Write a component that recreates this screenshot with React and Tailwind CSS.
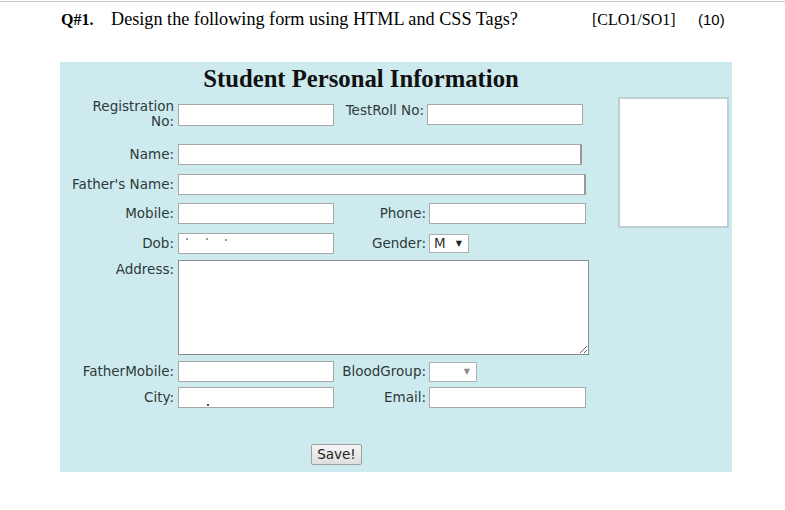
import React from 'react'

const labelFont = {fontFamily: '"DejaVu Sans", Verdana, sans-serif'}

function Label({children, className = ''}) {
	return (
		<div className={`text-right text-[13.5px] leading-[15px] text-[#2e3a3a] ${className}`}>{children}</div>
	)
}

function Field({className = '', children}) {
	return <div className={`relative border border-[#a8a8a8] bg-white ${className}`}>{children}</div>
}

function Select({value, width, dark}) {
	return (
		<div className={`flex items-center justify-between border border-[#b0b0b0] bg-white pl-[4px] pr-[6px] ${width}`}>
			<span className="text-[13.5px] leading-none text-[#333]">{value}</span>
			<span className={`text-[8px] leading-none ${dark ? 'text-[#222]' : 'text-[#8a8a8a]'}`}>▼</span>
		</div>
	)
}

export default function App() {
	return (
		<div className="w-[785px] h-[510px] bg-white overflow-hidden">
			<div className="pt-[1px]">
				<div className="border-t border-[#c4c4c4]" />
			</div>
			{/* question header */}
			<div className="flex items-baseline pl-[61px] pt-[5px] h-[29px] leading-[24px] text-black">
				<span className="w-[50px] text-[16px] font-bold" style={{fontFamily: '"Liberation Serif", serif'}}>Q#1.</span>
				<span className="w-[481px] text-[18.2px]" style={{fontFamily: '"Liberation Serif", serif'}}>Design the following form using HTML and CSS Tags?</span>
				<span className="w-[106px] text-[16px]" style={{fontFamily: '"Liberation Serif", serif'}}>[CLO1/SO1]</span>
				<span className="text-[15px]" style={{fontFamily: '"Liberation Sans", sans-serif'}}>(10)</span>
			</div>

			{/* form panel */}
			<div className="ml-[60px] mt-[31px] w-[672px] h-[410px] bg-[#cdebee] pt-[3px]" style={labelFont}>
				<div
					className="pr-[70px] text-center text-[24.7px] font-bold leading-[28px] text-[#111]"
					style={{fontFamily: '"Liberation Serif", serif'}}
				>
					Student Personal Information
				</div>

				<div className="mt-[4px] flex">
					<div className="w-[553px]">
						{/* registration / testroll */}
						<div className="mt-[2px] flex items-start h-[30px]">
							<Label className="w-[118px] pr-[4px]">Registration<br />No:</Label>
							<Field className="mt-[5px] w-[156px] h-[22px]" />
							<Label className="mt-[4px] w-[93px] pr-[3px]">TestRoll No:</Label>
							<Field className="mt-[5px] w-[156px] h-[21px]" />
						</div>

						<div className="mt-[15px] flex items-center h-[21px]">
							<Label className="w-[118px] pr-[4px]">Name:</Label>
							<Field className="w-[404px] h-[21px] border-r-2 border-r-[#999]" />
						</div>

						<div className="mt-[9px] flex items-center h-[21px]">
							<Label className="w-[118px] pr-[4px]">Father's Name:</Label>
							<Field className="w-[408px] h-[21px] border-r-2 border-r-[#999]" />
						</div>

						<div className="mt-[8px] flex items-center h-[21px]">
							<Label className="w-[118px] pr-[4px]">Mobile:</Label>
							<Field className="w-[156px] h-[21px]" />
							<Label className="w-[95px] pr-[3px]">Phone:</Label>
							<Field className="w-[157px] h-[21px]" />
						</div>

						<div className="mt-[9px] flex items-center h-[21px]">
							<Label className="w-[118px] pr-[4px]">Dob:</Label>
							<Field className="w-[156px] h-[21px]">
								<span className="absolute left-[7px] top-[4px] h-[1.5px] w-[1.5px] bg-[#999]" />
								<span className="absolute left-[27px] top-[4px] h-[1.5px] w-[1.5px] bg-[#999]" />
								<span className="absolute left-[46px] top-[5px] h-[1.5px] w-[1.5px] bg-[#999]" />
							</Field>
							<Label className="w-[95px] pr-[3px]">Gender:</Label>
							<Select value="M" width="w-[40px] h-[19px]" dark />
						</div>

						<div className="mt-[6px] flex items-start">
							<Label className="w-[118px] pr-[4px] pt-[2px]">Address:</Label>
							<textarea className="block w-[411px] h-[95px] border border-[#8c8c8c] bg-white" />
						</div>

						<div className="mt-[6px] flex items-center h-[21px]">
							<Label className="w-[118px] pr-[4px]">FatherMobile:</Label>
							<Field className="w-[156px] h-[21px]" />
							<Label className="w-[95px] pr-[3px]">BloodGroup:</Label>
							<Select value="" width="w-[48px] h-[20px]" />
						</div>

						<div className="mt-[5px] flex items-center h-[21px]">
							<Label className="w-[118px] pr-[4px]">City:</Label>
							<Field className="w-[156px] h-[21px]">
								<span className="absolute left-[28px] top-[16px] h-[2px] w-[2px] bg-[#555]" />
							</Field>
							<Label className="w-[95px] pr-[3px]">Email:</Label>
							<Field className="w-[157px] h-[21px]" />
						</div>

						<div className="mt-[36px] flex justify-center">
							<button
								type="button"
								className="h-[21px] w-[51px] rounded-[2px] border border-[#a0a0a0] bg-gradient-to-b from-[#f6f6f6] to-[#dedede] text-[13.5px] leading-none text-[#222]"
								style={labelFont}
							>
								Save!
							</button>
						</div>
					</div>

					<div className="ml-[5px] w-[111px] h-[131px] border-2 border-[#bccfd2] bg-white" />
				</div>
			</div>
		</div>
	)
}
